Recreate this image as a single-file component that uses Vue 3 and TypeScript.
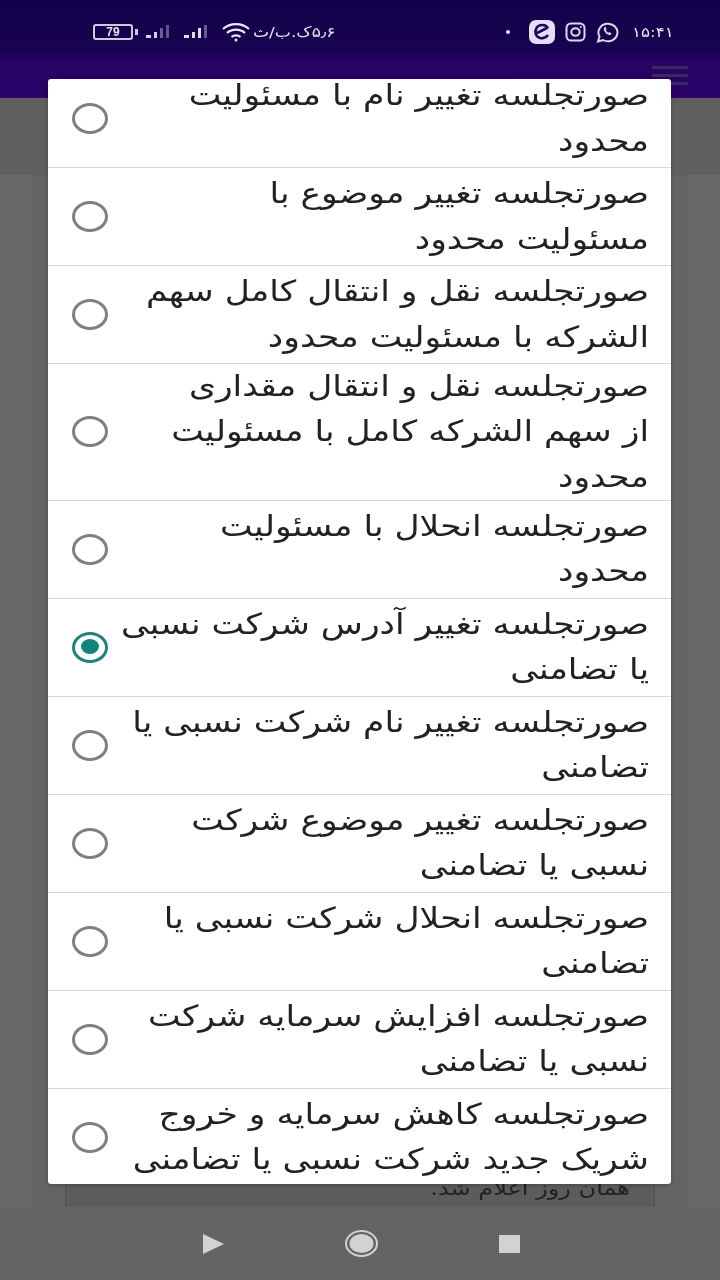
<script setup lang="ts">
interface Row { lines: string[]; checked?: boolean }
const rows: Row[] = [
  { lines: ['صورتجلسه تغییر نام با مسئولیت', 'محدود'] },
  { lines: ['صورتجلسه تغییر موضوع با', 'مسئولیت محدود'] },
  { lines: ['صورتجلسه نقل و انتقال کامل سهم', 'الشرکه با مسئولیت محدود'] },
  { lines: ['صورتجلسه نقل و انتقال مقداری', 'از سهم الشرکه کامل با مسئولیت', 'محدود'] },
  { lines: ['صورتجلسه انحلال با مسئولیت', 'محدود'] },
  { lines: ['صورتجلسه تغییر آدرس شرکت نسبی', 'یا تضامنی'], checked: true },
  { lines: ['صورتجلسه تغییر نام شرکت نسبی یا', 'تضامنی'] },
  { lines: ['صورتجلسه تغییر موضوع شرکت', 'نسبی یا تضامنی'] },
  { lines: ['صورتجلسه انحلال شرکت نسبی یا', 'تضامنی'] },
  { lines: ['صورتجلسه افزایش سرمایه شرکت', 'نسبی یا تضامنی'] },
  { lines: ['صورتجلسه کاهش سرمایه و خروج', 'شریک جدید شرکت نسبی یا تضامنی'] },
]
</script>

<template>
  <div class="screen">
    <header class="top">
      <div class="status">
        <div class="status-left">
          <span class="battery"><span class="battery-num">79</span></span>
          <svg class="signal" width="28" height="16" viewBox="0 0 28 16"><g fill="#d4d0e4"><rect x="0" y="11" width="5" height="3"/><rect x="8" y="8" width="3" height="6"/><rect x="14" y="4" width="3" height="10" opacity=".45"/><rect x="20" y="1" width="3" height="13" opacity=".4"/></g></svg>
          <svg class="signal" width="28" height="16" viewBox="0 0 28 16"><g fill="#e0dcec"><rect x="0" y="11" width="5" height="3"/><rect x="8" y="8" width="3" height="6"/><rect x="14" y="4" width="3" height="10"/><rect x="20" y="1" width="3" height="13" opacity=".4"/></g></svg>
          <svg width="30" height="20" viewBox="0 0 30 20" fill="none" stroke="#eceaf4" stroke-width="2.200"><path d="M1 7c7-6.500 19-6.500 26 0"/><path d="M5 11c5-4.500 13-4.500 18 0"/><path d="M9.500 15c2.500-2.200 6.500-2.200 9 0"/><circle cx="14" cy="18" r="1.500" fill="#eceaf4" stroke="none"/></svg>
          <span class="speed">۵٫۶ک.ب/ث</span>
        </div>
        <div class="status-right">
          <span class="dot"></span>
          <svg class="icon-e" width="26" height="24" viewBox="0 0 26 24"><rect x="0" y="0" width="26" height="24" rx="7" fill="#e4e0f4"/><path d="M19 8.500C17 4 10 4 7.500 8c-2.500 4-.5 9 3.500 10 3 .7 6-.5 8-3M8 13l10-5" fill="none" stroke="#1c0660" stroke-width="2.600"/></svg>
          <svg width="21" height="20" viewBox="0 0 21 20" fill="none" stroke="#dcd9e8" stroke-width="2"><rect x="1.500" y="1.500" width="18" height="17" rx="4.500"/><ellipse cx="10.500" cy="10" rx="4.200" ry="3.800"/><circle cx="15.800" cy="5" r="1" fill="#dcd9e8" stroke="none"/></svg>
          <svg width="24" height="22" viewBox="0 0 24 22" fill="none" stroke="#dcd9e8" stroke-width="2"><path d="M2 20.500l1.500-5A9.500 8.800 0 1 1 7 19z"/><path d="M8.500 6.500c-1.200 1-1 2.800.6 4.800 1.800 2.200 3.800 3 5.400 2.400l1.200-1.300-2.400-1.500-1 .8c-1.200-.6-2.100-1.600-2.600-2.800l.8-1-1-2.500z" fill="#dcd9e8" stroke="none"/></svg>
          <span class="clock">۱۵:۴۱</span>
        </div>
      </div>
      <div class="appbar">
        <div class="menu"><i></i><i></i><i></i></div>
      </div>
    </header>
    <div class="subheader"></div>
    <main class="content">
      <div class="page">
        <div class="article">
          <p class="article-text">همان روز اعلام شد.</p>
        </div>
      </div>
    </main>
    <nav class="nav">
      <svg width="21" height="20" viewBox="0 0 21 20"><path d="M0 0l21 10L0 20z" fill="#d2d2d2"/></svg>
      <svg width="33" height="27" viewBox="0 0 33 27"><ellipse cx="16.500" cy="13.500" rx="15.500" ry="12.500" fill="none" stroke="#d2d2d2" stroke-width="2"/><ellipse cx="16.500" cy="13.500" rx="12" ry="9.500" fill="#d2d2d2"/></svg>
      <span class="stop"></span>
    </nav>

    <section class="dialog">
      <ul class="list">
        <li v-for="(row, i) in rows" :key="i" class="row">
          <span class="radio" :class="{ on: row.checked }"></span>
          <div class="label">
            <span v-for="line in row.lines" :key="line" class="line">{{ line }}</span>
          </div>
        </li>
      </ul>
    </section>
  </div>
</template>

<style scoped>
.screen {
  position: relative;
  width: 720px;
  height: 1280px;
  overflow: hidden;
  display: flex;
  flex-direction: column;
  background: #666666;
  font-family: "DejaVu Sans", "Noto Sans", sans-serif;
  filter: blur(0.45px);
}
.top {
  height: 98px;
  background: linear-gradient(180deg, #12024c 0%, #17034f 50%, #280264 62%, #2a0268 100%);
  flex: none;
}
.status {
  height: 64px;
  display: flex;
  justify-content: space-between;
  align-items: center;
  padding: 0 46px 0 93px;
}
.status-left, .status-right { display: flex; align-items: center; }
.status-left { gap: 7px; }
.status-right { gap: 10px; }
.battery {
  position: relative;
  width: 36px;
  height: 12px;
  border: 2px solid #cfcbdc;
  border-radius: 3px;
  display: flex;
  align-items: center;
  justify-content: center;
  margin-right: 6px;
}
.battery::after {
  content: "";
  position: absolute;
  right: -7px;
  top: 3px;
  width: 3px;
  height: 6px;
  background: #cfcbdc;
}
.battery-num {
  font-family: "Liberation Sans", sans-serif;
  font-size: 12px;
  font-weight: 700;
  color: #e6e4ee;
  line-height: 1;
}
.signal { margin-right: 3px; }
.speed {
  font-size: 14px;
  color: #e8e6f0;
  direction: rtl;
  margin-left: -6px;
  transform: scaleX(1.22);
  transform-origin: left center;
}
.dot { width: 4px; height: 4px; border-radius: 50%; background: #e8e6f0; margin-right: 9px; }
.clock {
  font-size: 14px;
  color: #e8e6f0;
  direction: ltr;
  margin-left: 9px;
  transform: scaleX(1.2);
  transform-origin: right center;
}
.appbar { height: 34px; display: flex; justify-content: flex-end; padding-right: 32px; }
.menu { display: flex; flex-direction: column; gap: 5px; padding-top: 2px; }
.menu i { display: block; width: 36px; height: 3px; background: #3a2a62; }
.subheader {
  height: 77px;
  flex: none;
  background: #5f5f5f;
}
.content {
  flex: 1;
  min-height: 0;
  background: #686868;
  padding: 0 32px;
  display: flex;
  flex-direction: column;
}
.page {
  flex: 1;
  min-height: 0;
  background: #646464;
  padding: 0 33px;
}
.article {
  box-sizing: border-box;
  height: 100%;
  border-left: 1px solid #4f4f4f;
  border-right: 1px solid #4f4f4f;
  background: #5c5c5c;
  display: flex;
  flex-direction: column;
  justify-content: flex-end;
  padding: 0 24px 7px;
}
.article-text {
  margin: 0;
  direction: rtl;
  font-size: 20px;
  line-height: 24px;
  color: #222222;
  transform: scaleX(1.2);
  transform-origin: right center;
}
.nav {
  height: 73px;
  flex: none;
  background: #636363;
  display: flex;
  align-items: center;
  padding: 0 200px 0 203px;
  justify-content: space-between;
}
.stop { width: 21px; height: 18px; background: #d2d2d2; }
.dialog {
  position: absolute;
  left: 48px;
  top: 79px;
  width: 623px;
  height: 1105px;
  background: #ffffff;
  border-radius: 3px;
  overflow: hidden;
  box-shadow: 0 1px 4px rgba(0, 0, 0, 0.25);
}
.list {
  list-style: none;
  margin: -9px 0 0;
  padding: 0;
}
.row {
  display: flex;
  align-items: center;
  gap: 8px;
  padding: 0 22px 0 24px;
  min-height: 97px;
  border-bottom: 1px solid #d8d8d8;
}
.radio {
  flex: none;
  box-sizing: border-box;
  width: 36px;
  height: 31px;
  border: 3.500px solid #7f7f7f;
  border-radius: 50%;
  background: #fff;
  position: relative;
}
.radio.on {
  border-color: #1b8377;
}
.radio.on::after {
  content: "";
  position: absolute;
  left: 5.500px;
  top: 4.500px;
  width: 18px;
  height: 15px;
  border-radius: 50%;
  background: #12857a;
}
.label {
  flex: 1;
  direction: rtl;
  text-align: right;
  display: flex;
  flex-direction: column;
  align-items: flex-start;
  color: #222222;
  font-size: 29px;
  line-height: 45.300px;
  transform: scaleX(1.19);
  transform-origin: right center;
}
.line { white-space: nowrap; }
</style>
